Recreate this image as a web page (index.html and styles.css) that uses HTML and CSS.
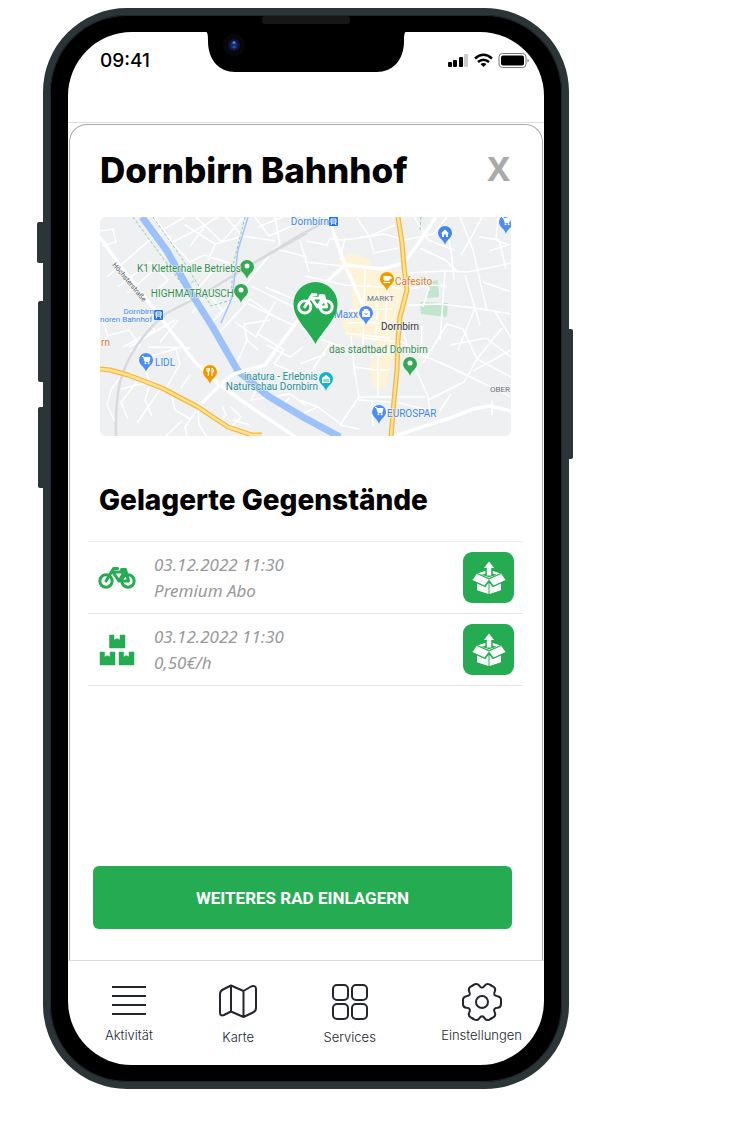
FILE: index.html
```html
<!DOCTYPE html>
<html lang="de">
<head>
<meta charset="utf-8">
<meta name="viewport" content="width=device-width, initial-scale=1">
<title>Dornbirn Bahnhof</title>
<link rel="stylesheet" href="styles.css">
</head>
<body>
<svg class="defs" width="0" height="0" aria-hidden="true">
  <defs>
    <symbol id="bike" viewBox="0 0 38 24">
      <g fill="none" stroke="currentColor" stroke-width="3" stroke-linecap="round" stroke-linejoin="round">
        <circle cx="8" cy="15" r="6.200"/><circle cx="30" cy="15" r="6.200"/>
        <path d="M8 15L15.500 2.500H19.500M13.500 6H26M15.500 7L21 15L26 6.500M23.500 3.500H27.500L30.500 15H22"/>
      </g>
    </symbol>
    <symbol id="unbox" viewBox="0 0 52 50">
      <g fill="#fff">
        <path d="M26 8.500L31 15H28.200V22.500H23.800V15H21z"/>
        <path d="M14 20.500L22.300 18V20.500L18.500 21.800L26 24.200L33.500 21.800L29.700 20.500V18L38 20.500L42.500 27L30.500 32.500L26 26.500L21.500 32.500L9.500 27z"/>
        <path d="M14 30.500L22.300 34.200L25.500 30V41L14 37.200zM38 30.500L29.700 34.200L26.500 30V41L38 37.200z"/>
      </g>
      <path d="M14 20.500L26 25.800L38 20.500" fill="none" stroke="#25ab52" stroke-width="1.200"/>
    </symbol>
    <path id="drop" d="M0 12C-1 7-7 5-7 0A7 7 0 1 1 7 0C7 5 1 7 0 12z"/>
    <path id="tooth" d="M19 0V2.500Q18.600 5.500 15.500 5.800Q10.600 6.100 12.770 10.530Q14.070 13.350 11.660 15.200L9.500 16.450"/>
    <g id="cart"><path d="M-4-3.500H-2.500L-1 1.500H3L4-2.500H-2" fill="#fff" stroke="#fff"/><circle cx="-.5" cy="3.300" r="1" fill="#fff"/><circle cx="2.700" cy="3.300" r="1" fill="#fff"/></g>
  </defs>
</svg>

<main class="stage">
  <div class="phone">
    <span class="key key-mute"></span><span class="key key-up"></span><span class="key key-down"></span><span class="key key-power"></span>
    <span class="speaker"></span>
    <svg class="notch" width="202" height="42" viewBox="0 0 202 42" aria-hidden="true">
      <path d="M0 0C3 1 3 5 3 10C3 30 15 41 30 41H172C187 41 199 30 199 10C199 5 199 1 202 0z" fill="#000"/>
      <circle cx="29" cy="14" r="11" fill="#08060b"/><circle cx="29" cy="14" r="6" fill="#101440"/><circle cx="29" cy="14" r="3.500" fill="#1b2870"/><circle cx="29" cy="11.500" r="1.500" fill="#6874b8"/><circle cx="29" cy="16" r="1.500" fill="#1d5a94"/>
    </svg>

    <div class="screen">
      <header class="status">
        <time>09:41</time>
        <svg width="84" height="18" viewBox="446 53 84 18" role="img" aria-label="Signal, WLAN, Akku">
          <rect x="448" y="63" width="4" height="5" rx="1"/><rect x="453" y="61" width="4" height="7" rx="1"/><rect x="459" y="58" width="4" height="10" rx="1"/><rect x="464" y="55" width="4" height="13" rx="1" fill="#ccc"/>
          <path d="M475 59.500Q483.500 52 492 59.500M478 63Q483.500 58.500 489 63" fill="none" stroke="#000" stroke-width="2.400"/><path d="M480.500 65Q483.500 63 486.500 65L483.500 68z"/>
          <rect x="499" y="54.500" width="27" height="14" rx="3.500" fill="none" stroke="#777"/><rect x="501" y="56.500" width="23" height="10" rx="2"/><path d="M527.500 59.500Q530 61.500 527.500 63.500z" fill="#777"/>
        </svg>
      </header>

      <section class="sheet">
        <div class="heading">
          <h1>Dornbirn Bahnhof</h1>
          <button class="close" type="button" aria-label="Schließen">X</button>
        </div>

        <svg class="map" viewBox="100 217 411 219" role="img" aria-label="Karte von Dornbirn">
          <rect x="100" y="217" width="411" height="219" fill="#eef0f2"/>
          <path d="M338 260L350 253L368 258L373 270L400 270L404 292L395 325L393 358L385 390L373 387L369 367L378 342L346 336L340 315L353 309L351 283z" fill="#fdf3d7"/>
          <path d="M420 302L448 303L447 317L421 314zM428 282L438 280L439 297L427 298z" fill="#c2e5ce"/>
          <g fill="none" stroke="#fff" stroke-width="1.500">
            <path d="M100 231L113 229L116 242L102 246M107 277L160 231L185 217M118 287L150 262L168 280L150 297M127 293L153 271M154 217L173 242L196 230L218 217M167 237L190 262L204 255L229 263M185 225L215 244L240 237M205 226L190 246M216 243L208 260M196 217L222 242L243 218M226 217L242 236L275 241M255 217L269 236L305 220M258 227L283 217M275 217L280 245L274 249M185 304L218 265M192 313L208 294L224 312M210 325L247 283L275 248M218 334L250 299L280 320M240 300L295 326M251 286L300 310M235 322L256 337L275 302M265 287L296 300M276 249L307 257M300 240L309 272"/>
            <path d="M305 262L343 266M306 241L327 245L330 239L344 240L384 234L405 240L433 234L447 217M305 276L345 285L400 288M345 238L340 260M357 218L369 236L374 253L399 248M370 236L395 225M414 217L428 240L454 250M420 248L445 260L459 273M447 228L452 258L454 280M460 217L473 250L487 311M482 217L471 238L461 255M479 237L499 240L506 269M498 217L496 240L509 245M408 273L445 271L468 272L511 263M407 290L430 285L447 286M408 305L440 304L475 308L511 314M429 287L423 307M445 271L440 340M465 275L480 325M489 251L511 244M483 282L511 292M475 308L458 350M494 310L511 338M408 274L430 290"/>
            <path d="M300 327L320 339L351 350L385 354M351 336L354 367L378 370M354 367L359 397L340 425L359 429M378 354L378 397M359 397L425 397M359 400L400 403L428 410M300 364L326 354M300 400L318 407L345 427M318 407L300 415M330 343L310 374M363 338L402 342L424 356L450 367L511 397M399 317L410 355L428 397L431 417M422 326L421 358M423 363L447 324L463 329L477 359L511 377M428 400L464 382L477 359L502 328M439 412L451 394M450 345L486 338L511 357M473 371L511 350M492 400L492 415M372 400L373 426"/>
            <path d="M102 320L108 336L100 346M106 336L129 330L140 345L130 352M123 347L155 330L145 320M129 347L175 320M140 359L176 349L180 364L165 390M143 364L150 382L121 389M148 347L190 348M178 320L160 342M190 375L181 388M121 376L111 390L107 405L115 422M139 379L121 402L128 419M150 384L145 400L152 416M161 388L137 423M171 393L175 410L190 419M196 411L185 427L187 436M198 407L199 424L206 436M182 421L166 436M222 405L226 415L219 426M231 407L241 417L232 426M233 420L250 425M236 365L247 340L244 324L270 320M247 340L258 350M258 334L284 350L274 364M267 345L290 357L303 347M274 364L305 377M264 376L251 400L290 394L305 405M278 410L289 398"/>
          </g>
          <g fill="none" stroke="#8fcf9f" stroke-width="1" stroke-dasharray="3 2"><path d="M133 217L184 287L194 281M153 217L181 257L211 306L231 300M245 217L233 265L231 300M421 217L420 232"/></g>
          <g fill="none" stroke="#d8dadd" stroke-width="2.500"><path d="M327 221L300 235L252 264L200 296L165 314Q130 345 120 382Q115 405 116 436M252 264L307 233"/></g>
          <path d="M248 217L238 250L232 298L221 323" fill="none" stroke="#a4c5fa" stroke-width="1.500"/>
          <path d="M142 217L167 251L188 288L212 326L238 371L268 396L303 417L340 437" fill="none" stroke="#9dc1fa" stroke-width="7"/>
          <g fill="none" stroke="#fff" stroke-linejoin="round">
            <path d="M100 237L118 263L164 322L195 362L220 385L245 403L297 438M198 407L220 385Q229 375 240 372L265 365L278 347L298 320M323 285L345 265L382 269L404 263L415 248L436 217M328 217L345 265M345 265L363 305M388 438L450 418L473 409L490 406L511 411" stroke-width="3.500"/>
            <path d="M350 310L392 309M348 323L395 322M365 270L363 345M378 290L376 340M388 280L385 330M345 333L390 338M370 357L395 350M380 370L390 370" stroke-width="1.500"/>
          </g>
          <g fill="none" stroke-linejoin="round">
            <path d="M100 369L110 370L128 375L162 388L198 407L228 427L252 435H262M398 217L402 243L404 267L407 290L400 317L398 340L397 370L394 400L391 437" stroke="#f6b73c" stroke-width="5"/>
            <path d="M100 369L110 370L128 375L162 388L198 407L228 427L252 435H262M398 217L402 243L404 267L407 290L400 317L398 340L397 370L394 400L391 437" stroke="#fde293" stroke-width="2.500"/>
          </g>

          <g class="pins">
            <use href="#drop" x="247" y="267" fill="#34a853"/><circle cx="247" cy="266" r="2.500" fill="#fff"/>
            <use href="#drop" x="241" y="291" fill="#34a853"/><circle cx="241" cy="290" r="2.500" fill="#fff"/>
            <use href="#drop" x="410" y="364" fill="#34a853"/><circle cx="410" cy="363" r="2.500" fill="#fff"/>
            <use href="#drop" x="146" y="360" fill="#4c8df6"/><use href="#cart" x="146" y="360"/>
            <use href="#drop" x="379" y="412" fill="#4c8df6"/><use href="#cart" x="379" y="411"/>
            <use href="#drop" x="506" y="222" fill="#4c8df6"/><use href="#cart" x="506" y="221"/>
            <use href="#drop" x="445" y="233" fill="#4285f4"/><path d="M441 233.500L445 229.500L449 233.500H448V237H446V234.500H444V237H442V233.500z" fill="#fff"/>
            <use href="#drop" x="366" y="313" fill="#4c8df6"/><path d="M362.500 311.500H369.500V316.500H362.500zM364 311.500V309.500H368V311.500" fill="#fff" stroke="#fff"/><path d="M364.500 313.500Q366 315.500 367.500 313.500" fill="none" stroke="#4c8df6"/>
            <use href="#drop" x="387" y="279" fill="#f29900"/><path d="M383.500 276H390V279Q390 281 387 281Q383.500 281 383.500 279zM383.500 282H390V283H383.500zM390 276.500H391.500V279H390z" fill="#fff"/>
            <use href="#drop" x="210" y="372" fill="#f29900"/><path d="M207 368V371Q208.300 373 209.500 371V368M208.300 368V376M212 376V368Q213.500 369 213.500 372H212" fill="none" stroke="#fff"/>
            <use href="#drop" x="326" y="379" fill="#12b5cb"/><path d="M322 378L326 375L330 378V383H322z" fill="#fff"/><path d="M324 379V382M326 379V382M328 379V382" stroke="#12b5cb"/>
            <rect x="329" y="217" width="9" height="9" rx="1" fill="#1a73e8"/><path d="M331 219H336V223H331zM331 225L332 223M336 225L335 223M331 221H336" fill="none" stroke="#fff"/>
            <rect x="154" y="310" width="9" height="10" rx="1" fill="#1a73e8"/><path d="M156 312H161V316H156zM156 318.500L157 316M161 318.500L160 316M156 314H161" fill="none" stroke="#fff"/>
          </g>

          <g class="labels">
            <g fill="#348f50"><text x="241" y="272" text-anchor="end">K1 Kletterhalle Betriebs</text><text x="234" y="297" text-anchor="end">HIGHMATRAUSCH</text><text x="329" y="353">das stadtbad Dornbirn</text></g>
            <g fill="#4285e8"><text x="329" y="225" text-anchor="end">Dornbirn</text><text class="stop" x="154" y="314" text-anchor="end">Dornbirn</text><text class="stop" x="100" y="322">noren Bahnhof</text><text x="155" y="366">LIDL</text><text x="358" y="318" text-anchor="end">Maxx</text><text x="387" y="417">EUROSPAR</text></g>
            <g fill="#248f94"><text x="318" y="380" text-anchor="end">inatura - Erlebnis</text><text x="318" y="390" text-anchor="end">Naturschau Dornbirn</text></g>
            <g fill="#d97a2b"><text x="395" y="285">Cafesito</text><text x="101" y="346">rn</text></g>
            <text class="area" x="367" y="301">MARKT</text><text class="area" x="490" y="392">OBER</text>
            <text class="town" x="381" y="330">Dornbirn</text>
            <text class="street" transform="translate(112 265) rotate(50)">Höchsterstraße</text>
          </g>

          <path d="M315.500 344C309 331 293.500 319 293.500 304A22 22 0 1 1 337.500 304C337.500 319 322 331 315.500 344z" fill="#25ab52"/>
          <use class="pin-bike" href="#bike" x="297" y="292" width="37" height="24"/>
        </svg>

        <h2>Gelagerte Gegenstände</h2>
        <ul class="items">
          <li>
            <svg class="kind" width="38" height="24"><use href="#bike"/></svg>
            <p><span>03.12.2022 11:30</span><span>Premium Abo</span></p>
            <button class="take" type="button" aria-label="Rad auslagern"><svg width="52" height="50"><use href="#unbox"/></svg></button>
          </li>
          <li>
            <svg class="kind" width="38" height="32" viewBox="0 0 38 32"><path d="M11.500 1H16V6L19 4.500L22 6V1H27V14H11.500zM2 18H6.500V23L9.500 21.500L12 23V18H17V31H2zM21 18H25.500V23L28.500 21.500L31 23V18H36V31H21z" fill="currentColor" stroke="currentColor" stroke-width=".5"/></svg>
            <p><span>03.12.2022 11:30</span><span>0,50€/h</span></p>
            <button class="take" type="button" aria-label="Pakete auslagern"><svg width="52" height="50"><use href="#unbox"/></svg></button>
          </li>
        </ul>
        <button class="primary" type="button">WEITERES RAD EINLAGERN</button>
      </section>

      <nav class="tabs">
        <a href="#aktivitaet"><svg width="40" height="40" viewBox="0 0 40 40"><path class="bars" d="M3 5H37M3 14H37M3 23H37M3 32H37"/></svg><span>Aktivität</span></a>
        <a class="low" href="#karte"><svg width="40" height="40" viewBox="0 0 40 40"><path d="M13 3.500L25.500 9L33 4.500Q38 3 38 7V26Q38 29 35 30.500L25.500 35L13 29.500L6 33Q2 34.500 2 30.500V12Q2 9 5 7.500zM13 3.500V29.500M25.500 9V35"/></svg><span>Karte</span></a>
        <a class="low" href="#services"><svg width="40" height="40" viewBox="0 0 40 40"><rect x="3" y="3" width="15" height="15" rx="4"/><rect x="22" y="3" width="15" height="15" rx="4"/><rect x="3" y="22" width="15" height="15" rx="4"/><rect x="22" y="22" width="15" height="15" rx="4"/></svg><span>Services</span></a>
        <a href="#einstellungen"><svg width="40" height="40" viewBox="-20 -20 40 40"><use href="#tooth"/><use href="#tooth" transform="rotate(60)"/><use href="#tooth" transform="rotate(120)"/><use href="#tooth" transform="rotate(180)"/><use href="#tooth" transform="rotate(240)"/><use href="#tooth" transform="rotate(300)"/><circle r="6"/></svg><span>Einstellungen</span></a>
      </nav>
    </div>
  </div>
</main>
</body>
</html>
```
FILE: styles.css
```css
* { box-sizing: border-box; }
body { margin: 0; background: #fff; color: #000; font-family: Inter, "Liberation Sans", sans-serif; }
button { border: 0; padding: 0; font: inherit; cursor: pointer; }
svg { display: block; }
.defs { position: absolute; }

.stage { padding: 8px 43px 38px; }
.phone {
  position: relative;
  max-width: 526px;
  padding: 17px 18px;
  border: 7px solid #2b3538;
  border-radius: 84px;
  background: #000;
  box-shadow: inset 0 0 0 1px #20282b;
}
.key { position: absolute; left: -12px; width: 5px; border-radius: 2px 0 0 2px; background: #2b3538; }
.key-mute { top: 207px; height: 41px; left: -13px; width: 6px; }
.key-up { top: 286px; height: 81px; }
.key-down { top: 392px; height: 81px; }
.key-power { top: 314px; height: 130px; left: auto; right: -11px; border-radius: 0 2px 2px 0; }
.speaker {
  position: absolute;
  top: 1px;
  left: 50%;
  width: 88px;
  height: 8px;
  margin-left: -44px;
  border-radius: 3px;
  background: #171717;
}
.notch { position: absolute; z-index: 1; top: 16px; left: 50%; margin-left: -101px; }

.screen { display: flex; flex-direction: column; overflow: hidden; border-radius: 64px; background: #fff; }
.status {
  display: flex;
  justify-content: space-between;
  align-items: center;
  min-height: 91px;
  padding: 20px 14px 52px 32px;
  border-bottom: 1px solid #ddd;
}
.status time { font-size: 19px; line-height: 18px; font-weight: 500; }

.sheet {
  display: flex;
  flex-direction: column;
  margin: 1px 1px 0;
  padding: 23px 0 31px;
  border: 1px solid #aaa;
  border-bottom: 0;
  border-radius: 18px 18px 0 0;
}
.heading { display: flex; justify-content: space-between; align-items: flex-start; margin: 0 32px 25px 30px; }
h1, h2 { margin: 0; font-weight: 800; }
h1 { font-size: 35px; line-height: 44px; }
.close { background: none; color: #aaa; font: 700 34px/40px "Noto Sans", sans-serif; }
.map { width: auto; margin: 0 31px 0 30px; border-radius: 6px; }
h2 { margin: 46px 29px 23px; font-size: 28px; line-height: 36px; }

.labels { font-family: Roboto, sans-serif; font-size: 10px; paint-order: stroke; stroke: #f6f7f8; stroke-width: 1px; }
.stop { font-size: 8px; }
.area { font-size: 8px; fill: #6b6f76; }
.town { font-size: 10px; fill: #333; }
.street { font-size: 7px; fill: #555; }
.pin-bike { color: #fff; }

.items { margin: 0 19px 0 18px; padding: 0; list-style: none; border-top: 1px solid #eee; }
.items li { display: flex; align-items: center; height: 72px; padding: 0 9px 0 10px; border-bottom: 1px solid #e6e6e6; }
.kind { flex: none; color: #25ab52; }
.items p { flex: 1; margin: 0 0 0 18px; color: #999; font: italic 17px/26px "Noto Sans", sans-serif; }
.items span { display: block; }
.take { display: grid; place-items: center; width: 51px; height: 51px; border-radius: 9px; background: #25ab52; }

.primary {
  min-height: 63px;
  margin: 180px 30px 0 23px;
  border-radius: 6px;
  background: #25ab52;
  color: #fff;
  font: 700 17px/20px Roboto, sans-serif;
}

.tabs { display: flex; justify-content: space-between; min-height: 105px; padding: 21px 22px 18px 37px; border-top: 1px solid #ddd; }
.tabs a { display: flex; flex-direction: column; align-items: center; gap: 3px; color: #23262d; text-decoration: none; font-size: 13px; line-height: 20px; font-weight: 300; }
.tabs .low { gap: 5px; }
.tabs svg { fill: none; stroke: #23262d; stroke-width: 2; stroke-linecap: round; stroke-linejoin: round; }
.tabs .bars { stroke-linecap: butt; }
```
